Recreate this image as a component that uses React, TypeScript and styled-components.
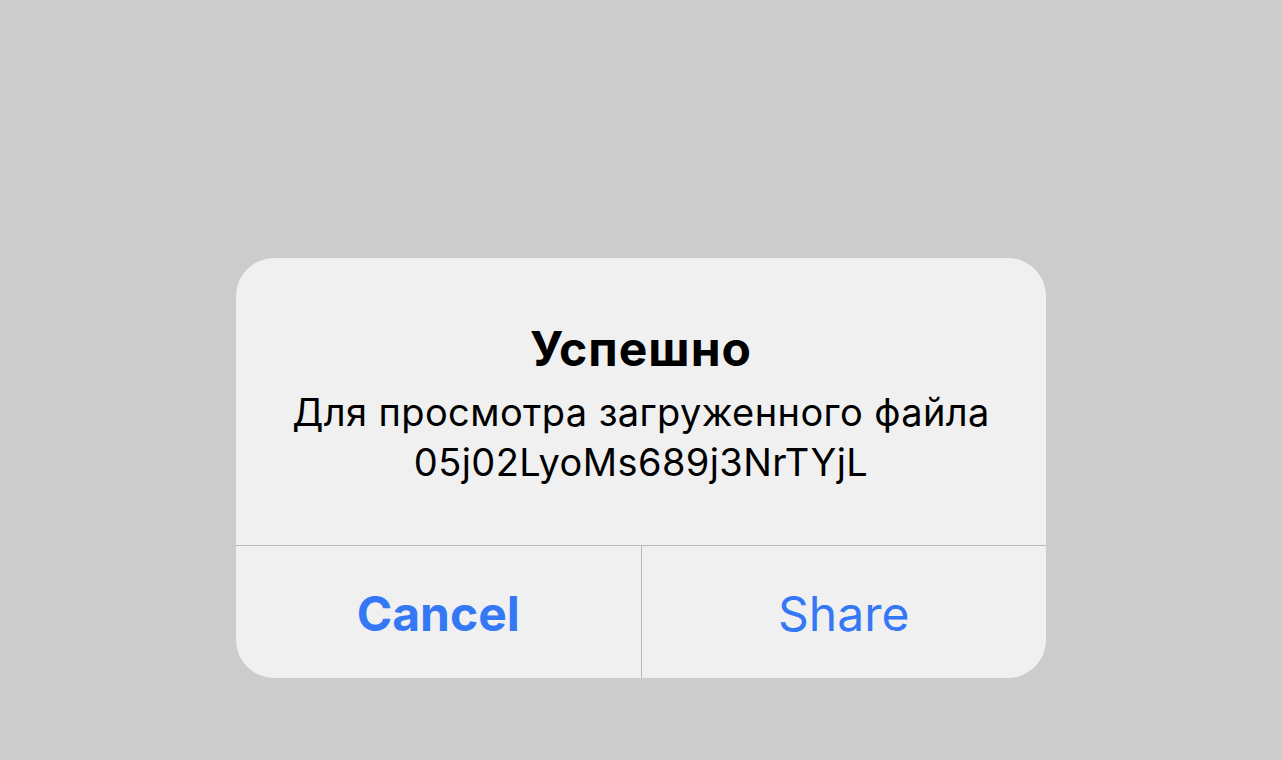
import React from "react";
import styled, { createGlobalStyle } from "styled-components";

const Global = createGlobalStyle`
  html, body { margin: 0; padding: 0; }
  body {
    background: #cccccc;
    font-family: Inter, "Noto Sans", "Liberation Sans", sans-serif;
    -webkit-font-smoothing: antialiased;
  }
`;

const Screen = styled.div`
  width: 1282px;
  height: 760px;
  background: #cccccc;
  display: flex;
  flex-direction: column;
  align-items: center;
  padding-top: 258px;
  box-sizing: border-box;
`;

const Dialog = styled.div`
  width: 810px;
  height: 420px;
  background: #f0f0f0;
  border-radius: 38px;
  overflow: hidden;
  display: flex;
  flex-direction: column;
`;

const Body = styled.div`
  height: 288px;
  display: flex;
  flex-direction: column;
  align-items: center;
  padding-top: 64px;
  box-sizing: border-box;
  border-bottom: 1px solid #b8b8b8;
`;

const Title = styled.h1`
  margin: 0;
  font-size: 48px;
  font-weight: 700;
  line-height: 54px;
  color: #000;
  letter-spacing: 1px;
`;

const Message = styled.p`
  margin: 11px 0 0;
  font-size: 38px;
  font-weight: 400;
  line-height: 50px;
  color: #000;
  text-align: center;
  letter-spacing: 0.4px;
`;

const Actions = styled.div`
  flex: 1;
  display: grid;
  grid-template-columns: 1fr 1px 1fr;
`;

const Separator = styled.div`
  background: #b8b8b8;
`;

const ActionButton = styled.button<{ $bold?: boolean }>`
  border: none;
  background: transparent;
  font-family: inherit;
  font-size: 48px;
  font-weight: ${(p) => (p.$bold ? 700 : 400)};
  color: #3478f6;
  display: flex;
  align-items: center;
  justify-content: center;
  padding: 2px 0 0;
  cursor: pointer;
`;

export default function App() {
  return (
    <>
      <Global />
      <Screen>
        <Dialog>
          <Body>
            <Title>Успешно</Title>
            <Message>
              Для просмотра загруженного файла
              <br />
              05j02LyoMs689j3NrTYjL
            </Message>
          </Body>
          <Actions>
            <ActionButton $bold>Cancel</ActionButton>
            <Separator />
            <ActionButton>Share</ActionButton>
          </Actions>
        </Dialog>
      </Screen>
    </>
  );
}
